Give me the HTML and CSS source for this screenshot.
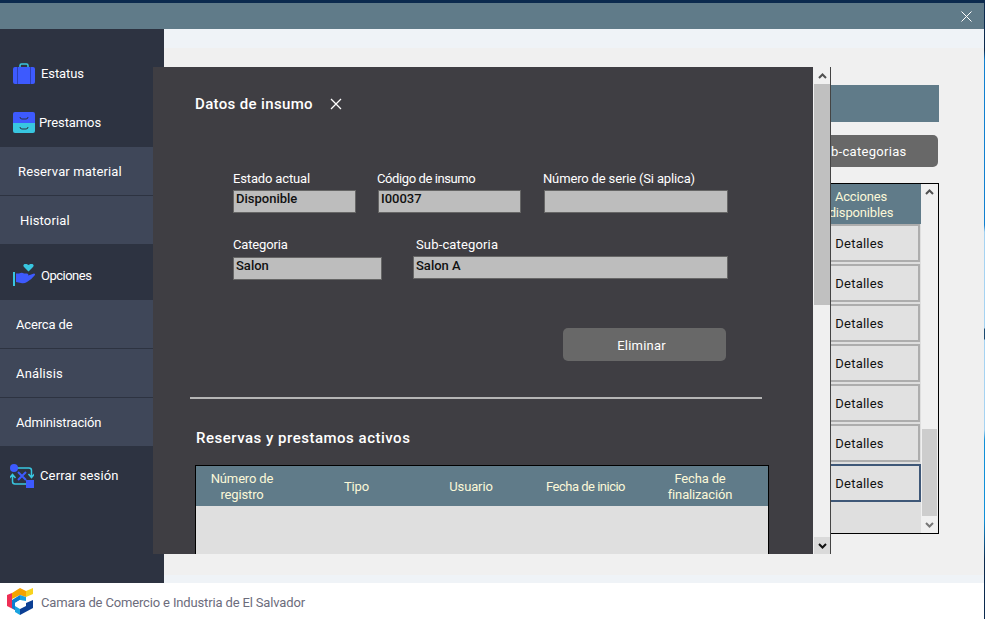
FILE: index.html
```html
<!DOCTYPE html>
<html lang="es">
<head>
    <meta charset="UTF-8">
    <title>Camara de Comercio e Industria de El Salvador</title>
    <link rel="stylesheet" href="styles.css">
</head>
<body>
<div class="topline"></div>
<header class="titlebar">
    <svg class="win-close" width="11" height="11" viewBox="0 0 11 11"><path d="M.5.5l10 10M10.5.5l-10 10" stroke="#fff" fill="none"/></svg>
</header>
<div class="main">
    <nav class="sidebar">
        <div class="nav-head head-estatus">
            <svg width="22" height="21" viewBox="0 0 22 21"><path d="M7 5V2.500Q7 1 8.500 1h5Q15 1 15 2.500V5" stroke="#38c6e0" stroke-width="1.500" fill="none"/><path d="M2 4h18q2 0 2 2v13q0 2-2 2H2q-2 0-2-2V6q0-2 2-2z" fill="#3d5afe"/><path d="M4.500 4v17M17.500 4v17" stroke="#2b3fb8"/></svg>
            <span>Estatus</span>
        </div>
        <div class="nav-head head-prestamos">
            <svg width="22" height="21" viewBox="0 0 22 21"><path d="M2 0h18q2 0 2 2v9H0V2q0-2 2-2z" fill="#3d5afe"/><path d="M0 11h22v8q0 2-2 2H2q-2 0-2-2z" fill="#38c6e0"/><path d="M7 5q0 2 2 2h4q2 0 2-2M7 15q0 2 2 2h4q2 0 2-2" stroke="#2d3341" fill="none"/></svg>
            <span>Prestamos</span>
        </div>
        <a class="nav-item item-reservar">Reservar material</a>
        <a class="nav-item item-historial">Historial</a>
        <div class="nav-head head-opciones">
            <svg width="22" height="22" viewBox="0 0 22 22"><path d="M15.500 7.500l-4.500-4.500q-1.500-2 .5-3 2-.6 4 1 2-1.600 4-1 2 1 .5 3z" fill="#38c6e0"/><path d="M0 8h2v14H0z" fill="#38c6e0"/><path d="M3 9.500h3q3-1.500 5 0h3q2 .5 1 2 2-.5 6-2 1.500 0 1 1.500-3 4-8 7-3 2-6 1l-5-1z" fill="#3d5afe"/></svg>
            <span>Opciones</span>
        </div>
        <a class="nav-item item-acerca">Acerca de</a>
        <a class="nav-item">Análisis</a>
        <a class="nav-item item-admin">Administración</a>
        <div class="nav-head head-cerrar">
            <svg width="24" height="24" viewBox="0 0 24 24"><path d="M7 4h12q2.500 0 2.500 2.500V13M18.500 10l3 3.500 3-3.500M17 20H5q-2.500 0-2.500-2.500V11M-.5 14l3-3.500 3 3.500" stroke="#38c6e0" stroke-width="1.500" fill="none"/><circle cx="4" cy="4" r="4" fill="#3d5afe"/><path d="M16 16h8v8h-8z" fill="#3d5afe"/><path d="M8 8l8 8M16 8l-8 8" stroke="#3d5afe" stroke-width="2"/></svg>
            <span>Cerrar sesión</span>
        </div>
    </nav>

    <section class="content">
        <div class="banner"></div>
        <a class="subcat-btn">Sub-categorias</a>
        <div class="list-box">
            <div class="list-col">
                <div class="list-head">Acciones disponibles</div>
                <a class="detail-btn">Detalles</a>
                <a class="detail-btn">Detalles</a>
                <a class="detail-btn">Detalles</a>
                <a class="detail-btn">Detalles</a>
                <a class="detail-btn">Detalles</a>
                <a class="detail-btn">Detalles</a>
                <a class="detail-btn focused">Detalles</a>
            </div>
            <div class="list-scroll">
                <svg width="9" height="6" viewBox="0 0 9 6"><path d="M1 5l3.500-3.500L8 5" stroke="#505050" stroke-width="2" fill="none"/></svg>
                <div class="list-track"><div class="list-thumb"></div></div>
                <svg width="9" height="6" viewBox="0 0 9 6"><path d="M1 1l3.500 3.500L8 1" stroke="#777" stroke-width="2" fill="none"/></svg>
            </div>
        </div>
    </section>

    <div class="modal">
        <div class="modal-pane">
            <div class="modal-title">
                <h2>Datos de insumo</h2>
                <svg width="12" height="12" viewBox="0 0 12 12"><path d="M1 1l10 10M11 1L1 11" stroke="#fff" stroke-width="1.300" fill="none"/></svg>
            </div>
            <div class="row row-one">
                <label class="field f-estado">Estado actual<span class="input">Disponible</span></label>
                <label class="field f-codigo">Código de insumo<span class="input">I00037</span></label>
                <label class="field f-serie">Número de serie (Si aplica)<span class="input"></span></label>
            </div>
            <div class="row row-two">
                <label class="field f-categoria">Categoria<span class="input">Salon</span></label>
                <label class="field f-sub">Sub-categoria<span class="input">Salon A</span></label>
            </div>
            <a class="delete-btn">Eliminar</a>
            <hr class="divider">
            <h3>Reservas y prestamos activos</h3>
            <div class="grid-box">
                <div class="grid-head">
                    <span>Número de registro</span>
                    <span>Tipo</span>
                    <span>Usuario</span>
                    <span class="col-inicio">Fecha de inicio</span>
                    <span>Fecha de finalización</span>
                </div>
            </div>
        </div>
        <div class="modal-scroll">
            <div class="arrow-up"><svg width="9" height="6" viewBox="0 0 9 6"><path d="M1 5l3.500-3.500L8 5" stroke="#505050" stroke-width="2" fill="none"/></svg></div>
            <div class="modal-track"><div class="modal-thumb"></div></div>
            <div class="arrow-down"><svg width="9" height="6" viewBox="0 0 9 6"><path d="M1 1l3.500 3.500L8 1" stroke="#111" stroke-width="2" fill="none"/></svg></div>
        </div>
    </div>
</div>
<footer class="footer">
    <svg width="28" height="27" viewBox="0 0 28 27"><path d="M6 5l8-5 6 3v6l-6-2-8 4z" fill="#f5a300"/><path d="M20 3l7-3v6l-7 3z" fill="#f7d21e"/><path d="M1 7l5-2v7l3 2v8l-8-4z" fill="#ee2f55"/><path d="M6 12l8-5v5l-5 3v7l-3-2z" fill="#0c7fd0"/><path d="M14 7l6 2v4l-6-1z" fill="#1aa3e0"/><path d="M9 15l5-3 6 3-6 3z" fill="#fff"/><path d="M9 18l5 3v6l-5-3z" fill="#1aa3e0"/><path d="M14 21l6-3v-3l7-3v8l-13 7z" fill="#0b3f94"/></svg>
    <span>Camara de Comercio e Industria de El Salvador</span>
</footer>
</body>
</html>
```

FILE: styles.css
```css
* {
    box-sizing: border-box;
}
body {
    margin: 0;
    width: 985px;
    height: 619px;
    padding-right: 1px;
    overflow: hidden;
    font-family: Roboto, "Liberation Sans", sans-serif;
    font-size: 13px;
    font-weight: 400;
    letter-spacing: -0.15px;
    /* the desktop showing past the window edge */
    background: linear-gradient(#0b2a4e 50px, #1080d0 60px, #1080d0 225px, #a5d3f2 232px, #a5d3f2 328px, #1b4a70 329px, #1b4a70 339px, #a5d3f2 340px, #a5d3f2 430px, #1090d8 440px, #1090d8 520px, #0b2a4e 560px);
}
.topline {
    height: 3px;
    background: #0b2a4e;
}
.titlebar {
    height: 26px;
    padding-right: 12px;
    background: #607b89;
    display: flex;
    justify-content: flex-end;
    align-items: center;
}
.main {
    position: relative;
    height: 554px;
    display: flex;
}

/* menu */
.sidebar {
    width: 164px;
    flex-shrink: 0;
    padding-top: 20px;
    background: #2d3341;
    color: #fff;
    letter-spacing: 0.15px;
}
.nav-head {
    display: flex;
    align-items: center;
    gap: 6px;
    height: 49px;
    padding-left: 13px;
}
.head-estatus {
    letter-spacing: -0.1px;
}
.head-prestamos {
    gap: 4px;
    letter-spacing: -0.1px;
}
.head-opciones {
    height: 56px;
    padding-top: 6px;
    gap: 6px;
    letter-spacing: -0.5px;
}
.head-cerrar {
    height: 59px;
    padding-left: 10px;
    gap: 6px;
}
.nav-item {
    display: flex;
    align-items: center;
    height: 48px;
    margin-bottom: 1px;
    padding-left: 16px;
    background: #3f4759;
}
.item-reservar {
    padding-left: 18px;
}
.item-historial {
    padding-left: 20px;
    margin-bottom: 0;
}
.item-acerca {
    letter-spacing: -0.15px;
}
.item-admin {
    margin-bottom: 0;
    letter-spacing: -0.15px;
}

/* what sits behind the dialog */
.content {
    flex: 1;
    border-top: 19px solid #eff3f7;
    border-bottom: 8px solid #eff3f7;
    padding: 37px 45px 0 0;
    background: #f0f0f0;
    display: flex;
    flex-direction: column;
    align-items: flex-end;
}
.banner {
    width: 200px;
    height: 37px;
    background: #607b89;
}
.subcat-btn {
    width: 154px;
    height: 32px;
    margin: 13px 1px 16px 0;
    border-radius: 5px;
    background: #686868;
    color: #fff;
    letter-spacing: 0.3px;
    text-align: center;
    line-height: 34px;
}
.list-box {
    width: 139px;
    height: 351px;
    border: 1px solid #000;
    display: flex;
    background: #f0f0f0;
}
.list-col {
    width: 120px;
    background: #dfdfdf;
}
.list-head {
    height: 40px;
    padding: 5px 18px 0;
    background: #607b89;
    color: #fbf8d8;
    line-height: 16px;
    text-align: center;
}
.detail-btn {
    display: block;
    height: 38px;
    margin: 0 1px 2px 0;
    padding-right: 2px;
    border: 2px solid #adadad;
    background: #e1e1e1;
    color: #111;
    letter-spacing: 0.2px;
    text-align: center;
    line-height: 35px;
}
.detail-btn.focused {
    margin-right: 0;
    padding-right: 3px;
    border-color: #3f5878;
}
.list-scroll {
    flex: 1;
    display: flex;
    flex-direction: column;
    align-items: center;
    padding: 5px 0;
}
.list-track {
    flex: 1;
    width: 15px;
    margin: 5px 0 6px;
    position: relative;
}
.list-thumb {
    position: absolute;
    left: 0;
    right: 0;
    bottom: 0;
    height: 87px;
    background: #cdcdcd;
}

/* dialog */
.modal {
    position: absolute;
    left: 153px;
    top: 38px;
    width: 678px;
    height: 487px;
    display: flex;
    background: #f0f0f0;
    border-right: 1px solid #444;
}
.modal-pane {
    width: 660px;
    overflow: hidden;
    padding: 26px 0 0 37px;
    background: #3f3e43;
    color: #fff;
}
.modal-title {
    display: flex;
    align-items: center;
    gap: 17px;
    margin-left: 5px;
    height: 22px;
}
h2,
h3 {
    margin: 0;
    font-size: 15px;
    font-weight: 500;
    letter-spacing: 0.5px;
}
h2 {
    letter-spacing: 0.35px;
}
.row {
    display: flex;
}
.row-one {
    margin: 56px 0 0 43px;
}
.row-two {
    margin: 24px 0 0 43px;
}
.field {
    display: flex;
    flex-direction: column;
    line-height: 15px;
}
.input {
    display: block;
    height: 23px;
    margin-top: 4px;
    padding: 0 2px;
    border: 1px solid #666;
    background: #bdbdbd;
    color: #111;
    font-weight: 500;
    letter-spacing: 0;
    text-indent: 0;
    line-height: 16px;
}
.f-estado {
    width: 123px;
    margin-right: 22px;
}
.f-codigo {
    width: 143px;
    margin-right: 23px;
    text-indent: -1px;
    letter-spacing: -0.4px;
}
.f-serie {
    width: 184px;
    text-indent: -1px;
}
.f-categoria {
    width: 149px;
    margin-right: 31px;
}
.f-categoria .input {
    margin-top: 5px;
}
.f-sub {
    width: 315px;
    padding-left: 3px;
    letter-spacing: 0.15px;
}
.f-sub .input {
    margin: 4px 0 0 -3px;
    padding-top: 1px;
}
.delete-btn {
    display: block;
    width: 163px;
    height: 33px;
    margin: 48px 0 0 373px;
    padding-right: 6px;
    border-radius: 5px;
    background: #686868;
    letter-spacing: 0.2px;
    text-align: center;
    line-height: 35px;
}
.divider {
    width: 572px;
    height: 2px;
    margin: 36px 0 0;
    border: 0;
    background: #b5b5b5;
}
h3 {
    margin: 29px 0 0 6px;
    line-height: 20px;
}
.grid-box {
    width: 574px;
    height: 120px;
    margin: 17px 0 0 5px;
    border: 1px solid #000;
    background: #dfdfdf;
}
.grid-head {
    height: 40px;
    padding-top: 2px;
    display: grid;
    grid-template-columns: repeat(5, 92px);
    column-gap: 22.5px;
    align-items: center;
    background: #607b89;
    color: #fbf8d8;
    line-height: 16px;
    text-align: center;
}
.col-inicio {
    letter-spacing: -0.5px;
}
.modal-scroll {
    flex: 1;
    display: flex;
    flex-direction: column;
    padding-left: 1px;
}
.arrow-up,
.arrow-down {
    height: 17px;
    display: flex;
    align-items: center;
    justify-content: center;
}
.arrow-down {
    background: #dadada;
}
.modal-track {
    flex: 1;
}
.modal-thumb {
    height: 221px;
    background: #c0c0c0;
}

/* bottom bar */
.footer {
    height: 36px;
    padding-left: 6px;
    display: flex;
    align-items: center;
    gap: 7px;
    background: #fff;
    color: #6c6c7c;
}
.footer span {
    margin-top: 2px;
}
```
